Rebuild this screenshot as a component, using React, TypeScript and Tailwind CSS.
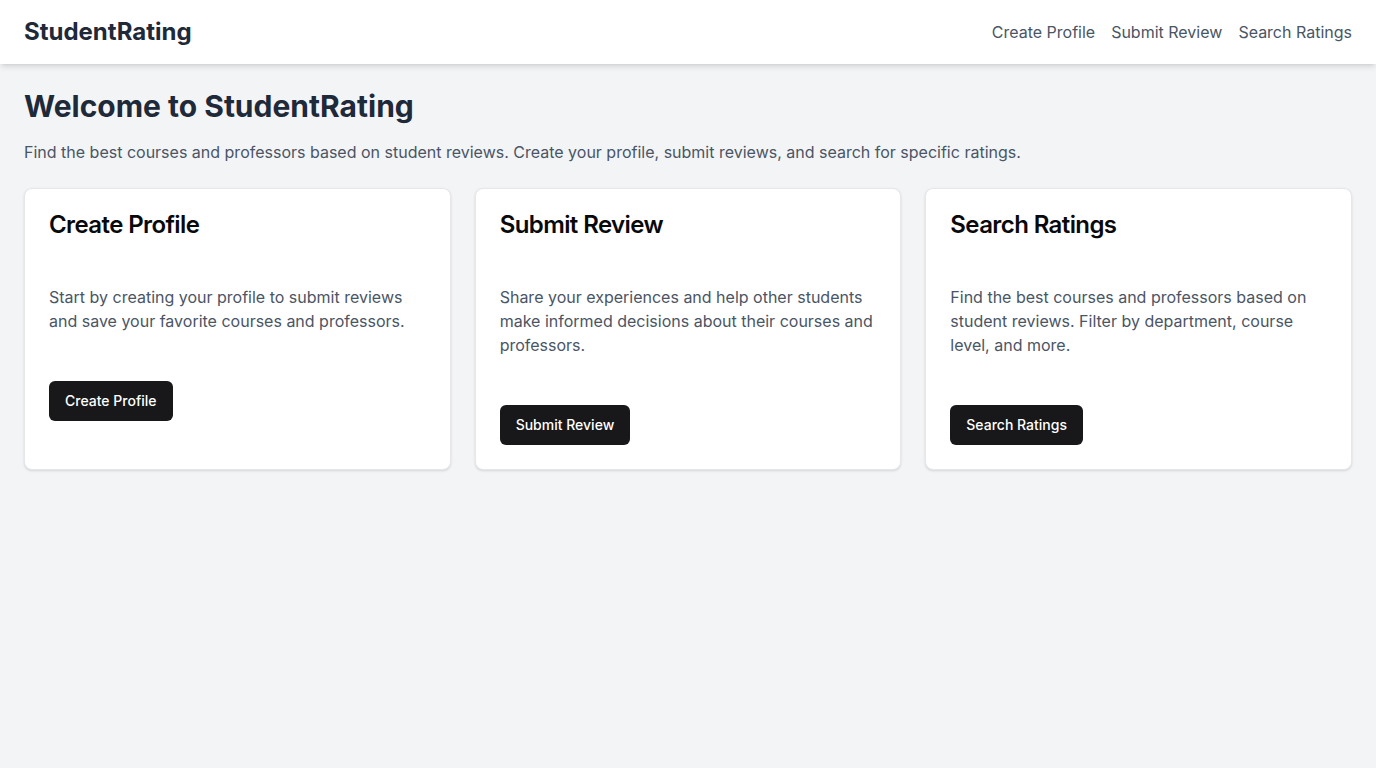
const cards = [
  {
    title: 'Create Profile',
    text: 'Start by creating your profile to submit reviews and save your favorite courses and professors.',
    action: 'Create Profile',
  },
  {
    title: 'Submit Review',
    text: 'Share your experiences and help other students make informed decisions about their courses and professors.',
    action: 'Submit Review',
  },
  {
    title: 'Search Ratings',
    text: 'Find the best courses and professors based on student reviews. Filter by department, course level, and more.',
    action: 'Search Ratings',
  },
]

export default function App() {
  return (
    <div className="min-h-screen bg-gray-100 font-['Inter',sans-serif]">
      <header className="bg-white shadow-md">
        <div className="h-16 px-6 flex items-center justify-between">
          <span className="text-2xl font-bold text-gray-800">StudentRating</span>
          <nav className="flex gap-4 text-gray-600">
            <a href="#">Create Profile</a>
            <a href="#">Submit Review</a>
            <a href="#">Search Ratings</a>
          </nav>
        </div>
      </header>

      <main className="px-6 pt-6">
        <h1 className="text-3xl font-bold text-gray-800 mb-4">Welcome to StudentRating</h1>
        <p className="text-gray-600 mb-6">
          Find the best courses and professors based on student reviews. Create your profile, submit reviews, and search for specific ratings.
        </p>

        <div className="grid grid-cols-3 gap-6">
          {cards.map((c) => (
            <div key={c.title} className="bg-white border border-gray-200 rounded-lg shadow-sm p-6">
              <h3 className="text-2xl font-semibold leading-none tracking-tight text-zinc-950">{c.title}</h3>
              <p className="mt-12 text-gray-600">{c.text}</p>
              <button className="mt-12 h-10 px-4 rounded-md bg-zinc-900 text-white text-sm font-medium">
                {c.action}
              </button>
            </div>
          ))}
        </div>
      </main>
    </div>
  )
}
